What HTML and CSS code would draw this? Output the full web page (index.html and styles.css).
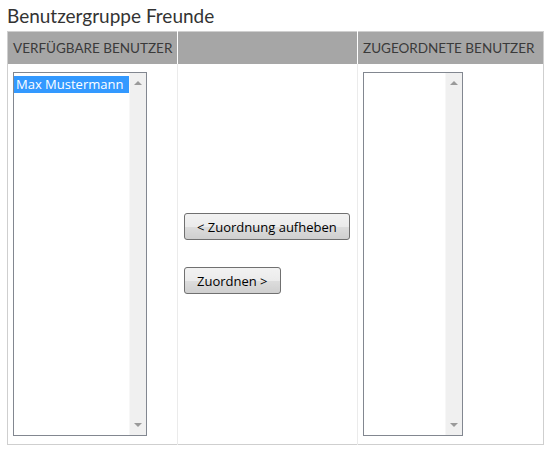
FILE: index.html
```html
<!DOCTYPE html>
<html lang="de">

<head>
    <meta charset="UTF-8">
    <meta name="viewport" content="width=device-width, initial-scale=1.0">
    <title>Benutzergruppe Freunde</title>
    <link rel="stylesheet" href="styles.css">
</head>

<body>

    <h1 class="titel">Benutzergruppe Freunde</h1>

    <table class="zuordnung">
        <thead>
            <tr>
                <th class="spalte-links">Verfügbare Benutzer</th>
                <th class="spalte-mitte"></th>
                <th class="spalte-rechts">Zugeordnete Benutzer</th>
            </tr>
        </thead>
        <tbody>
            <tr>
                <td>
                    <div class="liste liste-breit">
                        <div class="eintraege">
                            <div class="eintrag ausgewaehlt">Max Mustermann</div>
                        </div>
                        <div class="scrollbar">
                            <span class="pfeil pfeil-hoch"></span>
                            <span class="pfeil pfeil-runter"></span>
                        </div>
                    </div>
                </td>
                <td class="mitte">
                    <div class="knoepfe">
                        <button class="knopf">&lt; Zuordnung aufheben</button>
                        <button class="knopf">Zuordnen &gt;</button>
                    </div>
                </td>
                <td>
                    <div class="liste liste-schmal">
                        <div class="eintraege"></div>
                        <div class="scrollbar">
                            <span class="pfeil pfeil-hoch"></span>
                            <span class="pfeil pfeil-runter"></span>
                        </div>
                    </div>
                </td>
            </tr>
        </tbody>
    </table>

</body>

</html>
```

FILE: styles.css
```css
* {
    margin: 0;
    padding: 0;
    box-sizing: border-box;
}

body {
    padding: 6px 7px;
    font-family: Lato, "Open Sans", sans-serif;
    color: #333;
    background: #fff;
}

.titel {
    font-size: 19px;
    font-weight: normal;
    line-height: 20px;
    margin-bottom: 5px;
    color: #333;
}

.zuordnung {
    border-collapse: collapse;
    border: 1px solid #cfcfcf;
    width: 537px;
    table-layout: fixed;
}

.zuordnung th {
    background-color: #a6a6a6;
    height: 32px;
    font-size: 13.5px;
    font-weight: normal;
    text-transform: uppercase;
    text-align: left;
    padding: 0 5px;
    color: #3a3a3a;
    border-right: 1px solid #fff;
    white-space: nowrap;
}

.zuordnung th:last-child {
    border-right: 1px solid #cfcfcf;
}

.spalte-links {
    width: 170px;
}

.spalte-mitte {
    width: 180px;
}

.zuordnung td {
    vertical-align: top;
    padding: 8px 5px 8px 5px;
    border-right: 1px solid #ebebeb;
}

.zuordnung td:last-child {
    border-right: 1px solid #cfcfcf;
}

.zuordnung td.mitte {
    vertical-align: middle;
    padding-left: 6px;
}

.liste {
    display: flex;
    height: 364px;
    border: 1px solid #828790;
    background: #fff;
}

.liste-breit {
    width: 134px;
}

.liste-schmal {
    width: 100px;
}

.eintraege {
    flex: 1;
    padding-top: 3px;
}

.eintrag {
    font-family: "Open Sans", sans-serif;
    font-size: 13px;
    line-height: 17px;
    padding-left: 2px;
    color: #000;
}

.ausgewaehlt {
    background-color: #3399ff;
    color: #fff;
}

.scrollbar {
    width: 17px;
    background: #f0f0f0;
    border-left: 1px solid #f7f7f7;
    display: flex;
    flex-direction: column;
    justify-content: space-between;
    align-items: center;
    padding: 8px 0 8px 0;
}

.pfeil {
    width: 0;
    height: 0;
    border-left: 4px solid transparent;
    border-right: 4px solid transparent;
}

.pfeil-hoch {
    border-bottom: 4px solid #9a9a9a;
}

.pfeil-runter {
    border-top: 4px solid #9a9a9a;
}

.knoepfe {
    display: flex;
    flex-direction: column;
    align-items: flex-start;
    gap: 27px;
}

.knopf {
    font-family: "Open Sans", sans-serif;
    font-size: 13px;
    color: #000;
    height: 27px;
    padding: 0 12px;
    border: 1px solid #707070;
    border-radius: 3px;
    background: linear-gradient(#f2f2f2 0%, #ebebeb 50%, #dddddd 51%, #cfcfcf 100%);
}
```
